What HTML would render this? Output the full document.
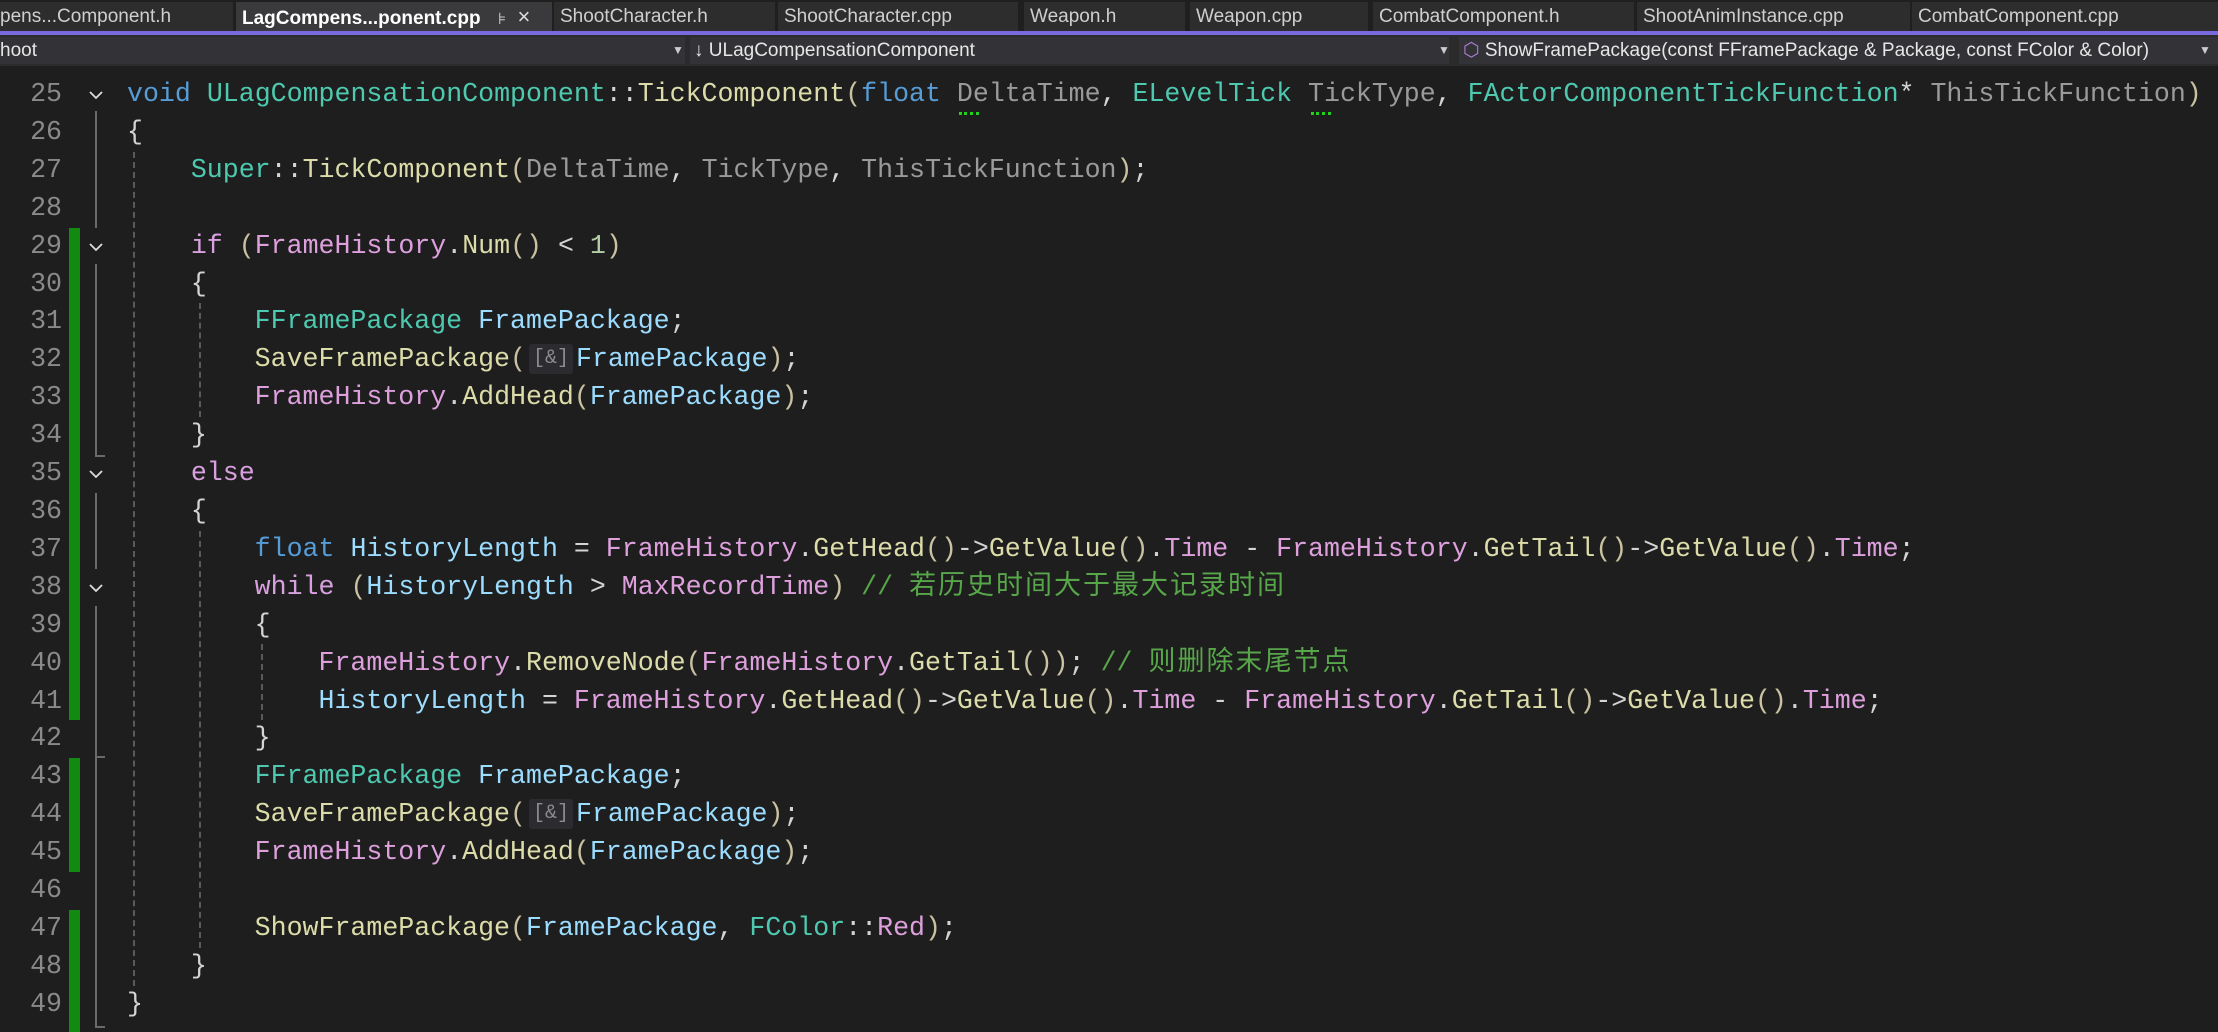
<!DOCTYPE html>
<html><head><meta charset="utf-8"><style>
*{margin:0;padding:0;box-sizing:border-box}
body{width:2218px;height:1032px;background:#1e1e1e;overflow:hidden;position:relative;font-family:"Liberation Sans","Noto Sans CJK SC",sans-serif}
.tabbar{position:absolute;left:0;top:0;width:2218px;height:31px;background:#1f1f1f}
.tab{position:absolute;top:2px;height:29px;background:#2d2d2d;color:#cfcfcf;font-size:19px;line-height:29px;padding-left:6px;white-space:nowrap;overflow:hidden}
.tab.act{background:#3a3a3c;color:#fff;font-weight:bold}
.pbar{position:absolute;left:0;top:31px;width:2218px;height:4px;background:#7a6ae0}
.tool{position:absolute;left:0;top:35px;width:2218px;height:31px;background:#2b2b2b}
.dd{position:absolute;top:2px;height:27px;background:#333337;color:#e6e6e6;font-size:19px;line-height:27px;white-space:nowrap;padding-left:4px}
.arr{position:absolute;color:#ccc;font-size:12px;top:0}
.gut{position:absolute;left:0;width:62px;text-align:right;color:#8a8a8a;font-family:"Liberation Mono",monospace;font-size:26.6px;line-height:37.9px}
.code{position:absolute;left:127px;top:76px;font-family:"Liberation Mono","Noto Sans CJK SC",monospace;font-size:26.6px;line-height:37.9px;color:#d4d4d4;white-space:pre}
.k{color:#569cd6}.t{color:#4ec9b0}.f{color:#dcdcaa}.m{color:#dda0dd}.c{color:#d8a0df}.p{color:#9a9a9a}.v{color:#9cdcfe}.n{color:#b5cea8}.g{color:#57a64a}.b{color:#c9c1a0}
.cj{font-family:"Noto Sans CJK SC",sans-serif;letter-spacing:2px;font-size:27px;line-height:1}
.hint{display:inline-block;width:44px;margin:0 3px 0 3px;height:30px;line-height:30px;vertical-align:middle;background:#2c2c30;color:#8c8c8c;font-size:20px;text-align:center;border-radius:3px}
.green{position:absolute;left:69px;width:11px;background:#128a12}
.fold{position:absolute;left:95px;width:2px;background:#6a6a6a}
.guide{position:absolute;width:0;border-left:2px dashed #5a5a5a}
.chev{position:absolute;left:88px;width:16px;height:16px}
.sq{position:absolute;height:3px;border-bottom:3px dotted #1fd21f}
</style></head><body>
<div class="tabbar">
<div class="tab" style="left:0;width:233px;padding-left:0">pens...Component.h</div>
<div class="tab act" style="left:236px;width:316px">LagCompens...ponent.cpp <span style="font-weight:normal;color:#ccc;font-size:16px;margin-left:12px">⊧</span> <span style="font-weight:normal;color:#ddd;margin-left:6px;font-size:22px">×</span></div>
<div class="tab" style="left:554px;width:221px">ShootCharacter.h</div>
<div class="tab" style="left:778px;width:240px">ShootCharacter.cpp</div>
<div class="tab" style="left:1024px;width:161px">Weapon.h</div>
<div class="tab" style="left:1190px;width:178px">Weapon.cpp</div>
<div class="tab" style="left:1373px;width:261px">CombatComponent.h</div>
<div class="tab" style="left:1637px;width:273px">ShootAnimInstance.cpp</div>
<div class="tab" style="left:1912px;width:306px">CombatComponent.cpp</div>
</div>
<div class="pbar"></div>
<div class="tool">
<div class="dd" style="left:0;width:685px;padding-left:0">hoot<span class="arr" style="left:672px">▼</span></div>
<div class="dd" style="left:690px;width:759px">↓ ULagCompensationComponent<span class="arr" style="left:748px">▼</span></div>
<div class="dd" style="left:1459px;width:759px"><span style="color:#b180d7">⬡</span> ShowFramePackage(const FFramePackage &amp; Package, const FColor &amp; Color)<span class="arr" style="left:740px">▼</span></div>
</div>

<div class="green" style="top:228px;height:492px"></div>
<div class="green" style="top:758px;height:114px"></div>
<div class="green" style="top:910px;height:122px"></div>

<div class="fold" style="top:111px;height:117px"></div>
<div class="fold" style="top:264px;height:193px"></div>
<div class="fold" style="top:455px;width:10px;height:2px"></div>
<div class="fold" style="top:493px;height:76px"></div>
<div class="fold" style="top:606px;height:152px"></div>
<div class="fold" style="top:756px;width:10px;height:2px"></div>
<div class="fold" style="top:758px;height:270px"></div>
<div class="fold" style="top:1026px;width:10px;height:2px"></div>

<div class="guide" style="left:133px;top:152px;height:834px"></div>
<div class="guide" style="left:199px;top:303px;height:114px"></div>
<div class="guide" style="left:199px;top:531px;height:417px"></div>
<div class="guide" style="left:261px;top:644px;height:76px"></div>

<svg class="chev" style="top:87px" viewBox="0 0 16 16"><path d="M2 5 L8 11 L14 5" fill="none" stroke="#ddd" stroke-width="1.8"/></svg>
<svg class="chev" style="top:239px" viewBox="0 0 16 16"><path d="M2 5 L8 11 L14 5" fill="none" stroke="#ddd" stroke-width="1.8"/></svg>
<svg class="chev" style="top:466px" viewBox="0 0 16 16"><path d="M2 5 L8 11 L14 5" fill="none" stroke="#ddd" stroke-width="1.8"/></svg>
<svg class="chev" style="top:580px" viewBox="0 0 16 16"><path d="M2 5 L8 11 L14 5" fill="none" stroke="#ddd" stroke-width="1.8"/></svg>

<div class="gut" style="top:76px">25<br>26<br>27<br>28<br>29<br>30<br>31<br>32<br>33<br>34<br>35<br>36<br>37<br>38<br>39<br>40<br>41<br>42<br>43<br>44<br>45<br>46<br>47<br>48<br>49</div>

<div class="sq" style="left:959px;top:112px;width:20px"></div>
<div class="sq" style="left:1311px;top:112px;width:20px"></div>

<div class="code"><span class="k">void</span> <span class="t">ULagCompensationComponent</span>::<span class="f">TickComponent</span><span class="b">(</span><span class="k">float</span> <span class="p">DeltaTime</span>, <span class="t">ELevelTick</span> <span class="p">TickType</span>, <span class="t">FActorComponentTickFunction</span>* <span class="p">ThisTickFunction</span><span class="b">)</span>
{
    <span class="t">Super</span>::<span class="f">TickComponent</span><span class="b">(</span><span class="p">DeltaTime</span>, <span class="p">TickType</span>, <span class="p">ThisTickFunction</span><span class="b">)</span>;

    <span class="c">if</span> <span class="b">(</span><span class="m">FrameHistory</span>.<span class="f">Num</span><span class="b">()</span> &lt; <span class="n">1</span><span class="b">)</span>
    {
        <span class="t">FFramePackage</span> <span class="v">FramePackage</span>;
        <span class="f">SaveFramePackage</span><span class="b">(</span><span class="hint">[&amp;]</span><span class="v">FramePackage</span><span class="b">)</span>;
        <span class="m">FrameHistory</span>.<span class="f">AddHead</span><span class="b">(</span><span class="v">FramePackage</span><span class="b">)</span>;
    }
    <span class="c">else</span>
    {
        <span class="k">float</span> <span class="v">HistoryLength</span> = <span class="m">FrameHistory</span>.<span class="f">GetHead</span><span class="b">()</span>-&gt;<span class="f">GetValue</span><span class="b">()</span>.<span class="m">Time</span> - <span class="m">FrameHistory</span>.<span class="f">GetTail</span><span class="b">()</span>-&gt;<span class="f">GetValue</span><span class="b">()</span>.<span class="m">Time</span>;
        <span class="c">while</span> <span class="b">(</span><span class="v">HistoryLength</span> &gt; <span class="m">MaxRecordTime</span><span class="b">)</span> <span class="g">// <span class="cj">若历史时间大于最大记录时间</span></span>
        {
            <span class="m">FrameHistory</span>.<span class="f">RemoveNode</span><span class="b">(</span><span class="m">FrameHistory</span>.<span class="f">GetTail</span><span class="b">())</span>; <span class="g">// <span class="cj">则删除末尾节点</span></span>
            <span class="v">HistoryLength</span> = <span class="m">FrameHistory</span>.<span class="f">GetHead</span><span class="b">()</span>-&gt;<span class="f">GetValue</span><span class="b">()</span>.<span class="m">Time</span> - <span class="m">FrameHistory</span>.<span class="f">GetTail</span><span class="b">()</span>-&gt;<span class="f">GetValue</span><span class="b">()</span>.<span class="m">Time</span>;
        }
        <span class="t">FFramePackage</span> <span class="v">FramePackage</span>;
        <span class="f">SaveFramePackage</span><span class="b">(</span><span class="hint">[&amp;]</span><span class="v">FramePackage</span><span class="b">)</span>;
        <span class="m">FrameHistory</span>.<span class="f">AddHead</span><span class="b">(</span><span class="v">FramePackage</span><span class="b">)</span>;

        <span class="f">ShowFramePackage</span><span class="b">(</span><span class="v">FramePackage</span>, <span class="t">FColor</span>::<span class="m">Red</span><span class="b">)</span>;
    }
}</div>
</body></html>
